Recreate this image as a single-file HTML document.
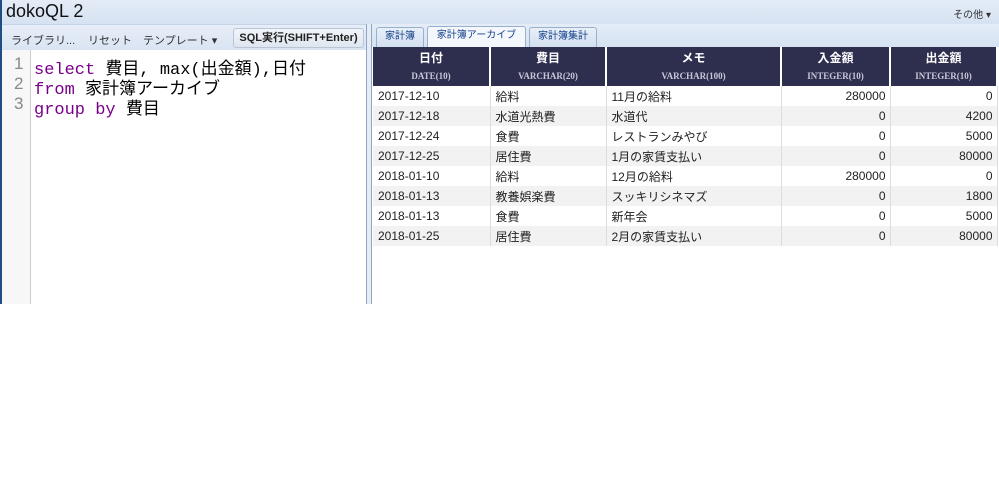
<!DOCTYPE html>
<html><head><meta charset="utf-8"><style>
*{margin:0;padding:0;box-sizing:border-box}
body{width:999px;height:484px;background:#fff;font-family:"Liberation Sans","Noto Sans CJK JP",sans-serif;position:relative;overflow:hidden}
.title{position:absolute;left:0;top:0;width:999px;height:24px;background:linear-gradient(#e4ecf7,#d6e2f2);border-left:2px solid #1f4f82}
.title .t{position:absolute;left:4px;top:1px;font-size:18px;color:#111}
.title .o{position:absolute;right:8px;top:6px;font-size:10px;color:#333}
.lbord{position:absolute;left:0;top:0;width:2px;height:304px;background:#1f4f82}
.tb{position:absolute;left:2px;top:24px;width:364px;height:26px;background:linear-gradient(#e8eef8,#d9e4f3);border-top:1px solid #c5d3e6}
.tb span{position:absolute;top:7px;font-size:11px;color:#333}
.btn{position:absolute;left:231px;top:3px;width:131px;height:20px;border:1px solid #b9c6d8;border-radius:3px;background:linear-gradient(#f2f5fa,#dfe6f0);font-size:11px;font-weight:bold;color:#222;text-align:center;line-height:18px}
.ed{position:absolute;left:2px;top:50px;width:364px;height:254px;background:#fff}
.gut{position:absolute;left:2px;top:50px;width:29px;height:254px;background:#f7f7f7;border-right:1px solid #ccc}
.ln{position:absolute;left:14px;font-size:17px;color:#888;font-family:"Liberation Sans",sans-serif}
.code{position:absolute;left:34px;font-size:17px;color:#000;white-space:pre;font-family:"Liberation Mono","Noto Sans CJK JP",monospace}
.k{color:#708}
.spl{position:absolute;left:366px;top:24px;width:6px;height:280px;background:#e6ecf4;border-left:1px solid #8fa6c2;border-right:1px solid #8fa6c2}
.tabs{position:absolute;left:372px;top:24px;width:627px;height:23px;background:linear-gradient(#e4ecf7,#d6e2f2)}
.tab{position:absolute;top:3px;height:20px;border:1px solid #99b0cc;border-bottom:none;border-radius:3px 3px 0 0;background:linear-gradient(#e8eff8,#d3dff0);font-size:10px;color:#15428b;text-align:center;line-height:18px}
.tab.a{background:#f4f7fc;top:2px;height:21px}
table{position:absolute;left:373px;top:47px;border-collapse:collapse;font-size:12px}
th{background:#2e2f4f;color:#fff;height:39px;border-right:2px solid #fff;font-weight:bold;font-size:12px;line-height:14px;padding-top:4px;vertical-align:top}
th small{display:block;font-size:9px;color:#c8c8d8;margin-top:4px;font-family:"Liberation Serif",serif}
td{height:20px;border-right:1px solid #ddd;padding:0 5px;color:#222;white-space:nowrap}
tr:nth-child(even) td{background:#fff}tr:nth-child(odd) td{background:#f2f2f2}
td.n{text-align:right;padding-right:4px}
.content{position:absolute;left:372px;top:47px;width:627px;height:257px;background:#fff}
</style></head><body>
<div class="title"><span class="t">dokoQL 2</span><span class="o">その他 ▾</span></div>
<div class="lbord"></div>
<div class="tb"><span style="left:9px">ライブラリ...</span><span style="left:86px">リセット</span><span style="left:141px">テンプレート ▾</span><div class="btn">SQL実行(SHIFT+Enter)</div></div>
<div class="ed"></div><div class="gut"></div>
<div class="ln" style="top:54px">1</div><div class="ln" style="top:74px">2</div><div class="ln" style="top:94px">3</div>
<div class="code" style="top:54px"><span class="k">select</span> 費目, max(出金額),日付</div>
<div class="code" style="top:74px"><span class="k">from</span> 家計簿アーカイブ</div>
<div class="code" style="top:94px"><span class="k">group by</span> 費目</div>
<div class="spl"></div>
<div class="tabs">
<div class="tab" style="left:4px;width:48px">家計簿</div>
<div class="tab a" style="left:55px;width:99px">家計簿アーカイブ</div>
<div class="tab" style="left:157px;width:68px">家計簿集計</div>
</div>
<div class="content"></div>
<table>
<tr><th style="width:117px">日付<small>DATE(10)</small></th><th style="width:116px">費目<small>VARCHAR(20)</small></th><th style="width:175px">メモ<small>VARCHAR(100)</small></th><th style="width:109px">入金額<small>INTEGER(10)</small></th><th style="width:107px">出金額<small>INTEGER(10)</small></th></tr>
<tr><td>2017-12-10</td><td>給料</td><td>11月の給料</td><td class="n">280000</td><td class="n">0</td></tr>
<tr><td>2017-12-18</td><td>水道光熱費</td><td>水道代</td><td class="n">0</td><td class="n">4200</td></tr>
<tr><td>2017-12-24</td><td>食費</td><td>レストランみやび</td><td class="n">0</td><td class="n">5000</td></tr>
<tr><td>2017-12-25</td><td>居住費</td><td>1月の家賃支払い</td><td class="n">0</td><td class="n">80000</td></tr>
<tr><td>2018-01-10</td><td>給料</td><td>12月の給料</td><td class="n">280000</td><td class="n">0</td></tr>
<tr><td>2018-01-13</td><td>教養娯楽費</td><td>スッキリシネマズ</td><td class="n">0</td><td class="n">1800</td></tr>
<tr><td>2018-01-13</td><td>食費</td><td>新年会</td><td class="n">0</td><td class="n">5000</td></tr>
<tr><td>2018-01-25</td><td>居住費</td><td>2月の家賃支払い</td><td class="n">0</td><td class="n">80000</td></tr>
</table>
</body></html>
